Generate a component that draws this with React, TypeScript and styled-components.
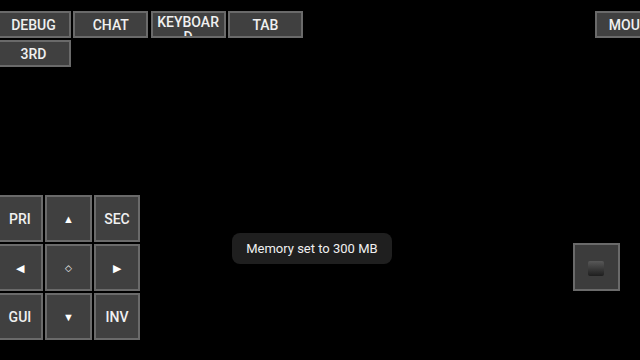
import React from 'react';
import styled, { createGlobalStyle } from 'styled-components';

const GlobalStyle = createGlobalStyle`
  html, body, #root {
    margin: 0;
    padding: 0;
    width: 100%;
    height: 100%;
    background: #000;
    overflow: hidden;
  }
  body {
    font-family: Roboto, "Liberation Sans", sans-serif;
  }
`;

const Screen = styled.div`
  width: 640px;
  height: 360px;
  display: flex;
  flex-direction: column;
  background: #000;
  overflow: hidden;
`;

const TopBar = styled.div`
  display: flex;
  justify-content: space-between;
  align-items: flex-start;
  padding-top: 11px;
`;

const ButtonGrid = styled.div`
  display: grid;
  grid-template-columns: repeat(4, 75px);
  grid-auto-rows: 27px;
  column-gap: 2.3px;
  row-gap: 2px;
  margin-left: -4px;
`;

const Key = styled.button<{ $w?: number; $h?: number }>`
  box-sizing: border-box;
  width: ${p => (p.$w ? `${p.$w}px` : '100%')};
  height: ${p => (p.$h ? `${p.$h}px` : '100%')};
  margin: 0;
  padding: 2px 2px 0;
  display: flex;
  flex-direction: column;
  justify-content: safe center;
  align-items: center;
  overflow: hidden;
  background: #404040;
  border: 2px solid #6a6a6a;
  color: #f0f0f0;
  font-family: Roboto, "Liberation Sans", sans-serif;
  font-size: 14px;
  font-weight: 500;
  line-height: 15px;
  text-align: center;
  word-break: break-all;
`;

const MouseKey = styled(Key)`
  margin-right: -30px;
`;

const BottomArea = styled.div`
  margin-top: auto;
  padding-bottom: 20px;
  display: flex;
  align-items: flex-start;
`;

const Pad = styled.div`
  display: grid;
  grid-template-columns: repeat(3, 46.5px);
  grid-auto-rows: 47px;
  gap: 2px;
  margin-left: -3.3px;
`;

const Arrow = styled.span<{ $size?: number }>`
  font-size: ${p => p.$size ?? 11}px;
  line-height: 1;
  color: #fff;
`;

const Toast = styled.div`
  margin-top: 38px;
  margin-left: 92px;
  height: 31px;
  padding: 0 14px;
  display: flex;
  align-items: center;
  background: #1f1f1f;
  border-radius: 8px;
  color: #f0f0f0;
  font-size: 13px;
  white-space: nowrap;
`;

const SquareKey = styled.div`
  box-sizing: border-box;
  margin: 48px 20px 0 auto;
  width: 47.5px;
  height: 48px;
  display: flex;
  align-items: center;
  justify-content: center;
  background: #3c3c3c;
  border: 2px solid #6a6a6a;
`;

const Stop = styled.div`
  width: 16px;
  height: 15px;
  border-radius: 2px;
  background: linear-gradient(#585858, #1e1e1e);
  margin-top: 2px;
`;

export default function App() {
  return (
    <>
      <GlobalStyle />
      <Screen>
        <TopBar>
          <ButtonGrid>
            <Key>DEBUG</Key>
            <Key>CHAT</Key>
            <Key>KEYBOARD</Key>
            <Key>TAB</Key>
            <Key>3RD</Key>
          </ButtonGrid>
          <MouseKey $w={75} $h={27}>MOUSE</MouseKey>
        </TopBar>
        <BottomArea>
          <Pad>
            <Key>PRI</Key>
            <Key><Arrow>▲</Arrow></Key>
            <Key>SEC</Key>
            <Key><Arrow>◀</Arrow></Key>
            <Key><Arrow $size={9}>◇</Arrow></Key>
            <Key><Arrow>▶</Arrow></Key>
            <Key>GUI</Key>
            <Key><Arrow>▼</Arrow></Key>
            <Key>INV</Key>
          </Pad>
          <Toast>Memory set to 300 MB</Toast>
          <SquareKey>
            <Stop />
          </SquareKey>
        </BottomArea>
      </Screen>
    </>
  );
}
